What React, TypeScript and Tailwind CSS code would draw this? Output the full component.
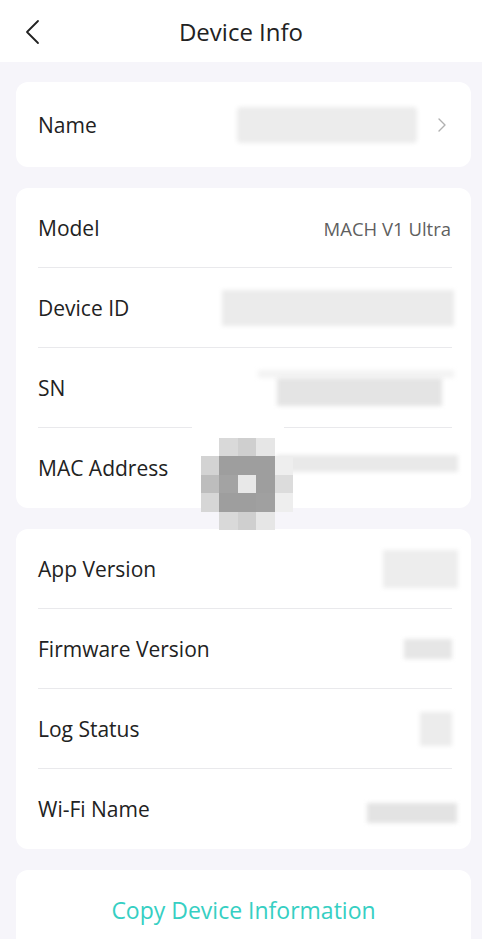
import { ReactNode } from 'react';

function Row({ label, children, last }: { label: string; children?: ReactNode; last?: boolean }) {
  return (
    <div className="pl-[22px] pr-[19px]">
      <div
        className={`h-20 flex items-center justify-between ${
          last ? '' : 'border-b border-[#e9e9ec]'
        }`}
      >
        <span className="text-[21px] text-[#222] pt-[2px]">{label}</span>
        {children}
      </div>
    </div>
  );
}

// Pixel mosaic that sits over the MAC address row
const MOSAIC = [
  ['', '#d9d9d9', '#cfcfcf', '#e6e6e6', ''],
  ['#d3d3d3', '#9e9e9e', '#9e9e9e', '#9e9e9e', '#eeeeee'],
  ['#bdbdbd', '#a3a3a3', '#e8e8e8', '#9e9e9e', '#dcdcdc'],
  ['#d6d6d6', '#9e9e9e', '#9e9e9e', '#a0a0a0', '#eeeeee'],
  ['', '#d9d9d9', '#cfcfcf', '#e6e6e6', ''],
];

export default function App() {
  return (
    <div className="min-h-screen bg-[#f6f5fa] font-['Open_Sans','Noto_Sans',sans-serif]">
      {/* Header */}
      <div className="h-[62px] bg-white relative flex items-center justify-center">
        <button className="absolute left-[24px] top-[19px]">
          <svg width="18" height="26" viewBox="0 0 18 26" fill="none">
            <path d="M14 2 L3 13 L14 24" stroke="#222" strokeWidth="1.8" strokeLinecap="round" strokeLinejoin="round" />
          </svg>
        </button>
        <h1 className="text-[24px] text-[#222] pt-[1px]">Device Info</h1>
      </div>

      <div className="pl-4 pr-[11px] pt-5 flex flex-col gap-[21px]">
        {/* Name */}
        <div className="bg-white rounded-xl h-[85px] pl-[22px] pr-[24px] flex items-center justify-between">
          <span className="text-[21px] text-[#222] pt-[2px]">Name</span>
          <div className="flex items-center gap-5">
            <div className="w-[180px] h-[36px] bg-[#ececec] blur-[2px] rounded-sm" />
            <svg width="10" height="16" viewBox="0 0 10 16" fill="none">
              <path d="M2 2 L8 8 L2 14" stroke="#b0b0b0" strokeWidth="1.4" strokeLinecap="round" strokeLinejoin="round" />
            </svg>
          </div>
        </div>

        {/* Device */}
        <div className="bg-white rounded-xl relative">
          <Row label="Model">
            <span className="text-[18.5px] text-[#5f5f5f] mr-[1px] pt-[2px]">MACH V1 Ultra</span>
          </Row>
          <Row label="Device ID">
            <div className="w-[232px] h-[36px] bg-[#ebebeb] blur-[2px] mr-[-2px]" />
          </Row>
          <Row label="SN">
            <div className="flex flex-col items-end mr-[-2px]">
              <div className="w-[196px] h-[8px] bg-[#f3f3f3] blur-[2px]" />
              <div className="w-[165px] h-[28px] bg-[#e4e4e4] blur-[2px] mr-[12px]" />
            </div>
          </Row>
          <Row label="MAC Address" last>
            <div className="w-[182px] h-[17px] bg-[#e9e9e9] blur-[2px] mr-[-6px] -mt-[10px]" />
          </Row>

          <div className="absolute left-[176px] top-[236px] w-[92px] h-[12px] bg-white" />
          <div className="absolute left-[185px] top-[250px] grid grid-cols-5 w-[92px] h-[92px]">
            {MOSAIC.flat().map((c, i) => (
              <div key={i} style={{ background: c || 'transparent' }} />
            ))}
          </div>
        </div>

        {/* Versions */}
        <div className="bg-white rounded-xl">
          <Row label="App Version">
            <div className="w-[75px] h-[38px] bg-[#ededed] blur-[2px] mr-[-6px]" />
          </Row>
          <Row label="Firmware Version">
            <div className="w-[48px] h-[20px] bg-[#e6e6e6] blur-[2px]" />
          </Row>
          <Row label="Log Status">
            <div className="w-[32px] h-[34px] bg-[#ececec] blur-[2px]" />
          </Row>
          <Row label="Wi-Fi Name" last>
            <div className="w-[90px] h-[20px] bg-[#e3e3e3] blur-[2px] mr-[-5px] mt-[8px]" />
          </Row>
        </div>

        {/* Copy */}
        <div className="bg-white rounded-xl h-20 flex items-center justify-center">
          <span className="text-[23px] text-[#36cfc3]">Copy Device Information</span>
        </div>
      </div>
    </div>
  );
}
